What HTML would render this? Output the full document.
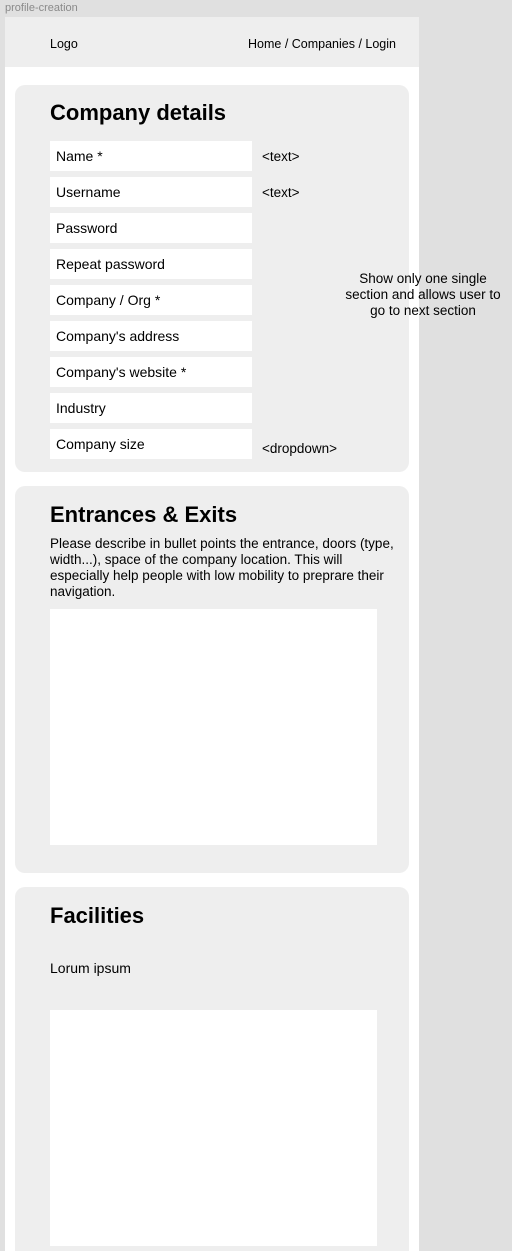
<!DOCTYPE html>
<html style="overflow:hidden;height:1251px"><head><style>
body{margin:0;width:512px;height:1251px;background:#e0e0e0;font-family:"Liberation Sans",Arial,sans-serif;position:relative;overflow:hidden;color:#000}
.t{position:absolute;left:5px;top:2px;font-size:11px;color:#8a8a8a}
.frame{position:absolute;left:5px;top:17px;width:414px;height:1234px;background:#fff}
.hdr{position:absolute;left:5px;top:17px;width:414px;height:50px;background:#eeeeee;font-size:12.5px}
.card{position:absolute;left:15px;width:394px;background:#eeeeee;border-radius:10px}
h2{position:absolute;left:35px;margin:0;font-size:22px;font-weight:bold}
.f{position:absolute;left:35px;width:202px;height:30px;background:#fff;font-size:14px;line-height:30px;padding-left:6px;box-sizing:border-box}
.l{position:absolute;left:247px;font-size:13.5px}
.ta{position:absolute;left:35px;width:327px;height:236px;background:#fff}
p{position:absolute;left:35px;margin:0;font-size:13.5px;line-height:16px;width:350px}
.side{position:absolute;left:340px;width:166px;top:271px;text-align:center;font-size:13.5px;line-height:16px}
</style></head><body>
<div class="t">profile-creation</div>
<div class="frame"></div>
<div class="hdr"><span style="position:absolute;left:45px;top:20px">Logo</span><span style="position:absolute;right:23px;top:20px">Home / Companies / Login</span></div>
<div class="card" style="top:85px;height:387px">
<h2 style="top:15px">Company details</h2>
<div class="f" style="top:56px">Name *</div>
<div class="f" style="top:92px">Username</div>
<div class="f" style="top:128px">Password</div>
<div class="f" style="top:164px">Repeat password</div>
<div class="f" style="top:200px">Company / Org *</div>
<div class="f" style="top:236px">Company's address</div>
<div class="f" style="top:272px">Company's website *</div>
<div class="f" style="top:308px">Industry</div>
<div class="f" style="top:344px">Company size</div>
<div class="l" style="top:64px">&lt;text&gt;</div>
<div class="l" style="top:100px">&lt;text&gt;</div>
<div class="l" style="top:356px">&lt;dropdown&gt;</div>
</div>
<div class="card" style="top:486px;height:387px">
<h2 style="top:16px">Entrances &amp; Exits</h2>
<p style="top:50px">Please describe in bullet points the entrance, doors (type, width...), space of the company location. This will especially help people with low mobility to preprare their navigation.</p>
<div class="ta" style="top:123px"></div>
</div>
<div class="card" style="top:887px;height:380px">
<h2 style="top:16px">Facilities</h2>
<p style="top:73px;font-size:14px">Lorum ipsum</p>
<div class="ta" style="top:123px"></div>
</div>
<div class="side">Show only one single section and allows user to go to next section</div>
</body></html>
